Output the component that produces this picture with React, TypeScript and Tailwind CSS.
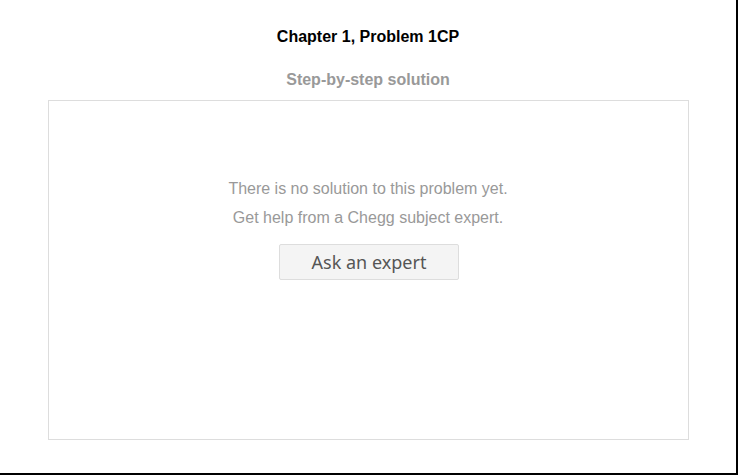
import React from 'react'

const arial = { fontFamily: '"Liberation Sans", Arial, sans-serif' }

export default function App() {
  return (
    <div className="w-[738px] h-[475px] bg-white border-r-2 border-b-2 border-black flex flex-col items-center" style={arial}>
      <h1 className="mt-[27px] text-[16px] leading-[20px] font-bold text-black">Chapter 1, Problem 1CP</h1>
      <h2 className="mt-[23px] text-[16px] leading-[20px] font-bold text-[#999999]">Step-by-step solution</h2>
      <div className="mt-[10px] w-[641px] h-[340px] border border-[#dddddd] flex flex-col items-center">
        <p className="mt-[78px] text-[16px] leading-[20px] text-[#999999]">There is no solution to this problem yet.</p>
        <p className="mt-[9px] text-[16px] leading-[20px] text-[#999999]">Get help from a Chegg subject expert.</p>
        <button className="mt-[16px] ml-[2px] w-[180px] h-[36px] rounded-[2px] border border-[#dddddd] bg-[#f4f4f4] text-[#555555] text-[18px] leading-[34px] font-['Noto_Sans',sans-serif]">
          Ask an expert
        </button>
      </div>
    </div>
  )
}
